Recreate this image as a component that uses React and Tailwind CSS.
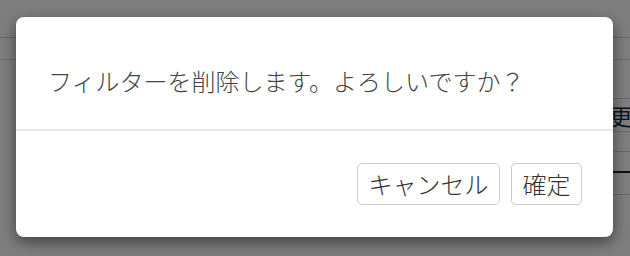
export default function App() {
  return (
    <div
      className="relative w-[630px] h-[256px] overflow-hidden bg-white"
      style={{ fontFamily: '"Noto Sans CJK JP", "Noto Sans", sans-serif' }}
    >
      {/* Page behind the modal */}
      <div className="flex flex-col">
        <div className="h-[38px] border-b border-[#d0d0d0]" />
        <div className="h-[22px] border-b border-[#d8d8d8]" />
        <div className="flex justify-end">
          <div className="w-[30px] flex flex-col">
            <div className="h-[39px] border-b border-[#d0d0d0]" />
            <div className="h-[33px] border-b border-[#d0d0d0] flex items-center text-[22px] leading-none text-[#1a2a44] pl-[10px] whitespace-nowrap">
              更新
            </div>
            <div className="h-[20px] border-b border-[#d0d0d0]" />
            <div className="h-[21px] border-b-2 border-[#222] ml-[12px]" />
            <div className="h-[22px] border-b border-[#d0d0d0]" />
          </div>
        </div>
      </div>

      {/* Backdrop */}
      <div className="absolute inset-0 bg-black/50 pt-[17px] pl-[16px]">
        <div className="w-[597px] h-[220px] bg-white rounded-[8px] shadow-[0_5px_15px_rgba(0,0,0,0.5)] flex flex-col">
          <div className="h-[114px] flex items-center pt-[16px] px-8 text-[24px] font-light text-[#444] border-b-2 border-[#e8e8e8] whitespace-nowrap">
            フィルターを削除します。よろしいですか？
          </div>
          <div className="flex-1 flex items-center justify-end gap-[11px] pr-[31px]">
            <button className="w-[143px] h-[42px] border-[1.5px] border-[#cccccc] rounded-[5px] bg-white text-[24px] font-light text-[#333] flex items-center justify-center">
              キャンセル
            </button>
            <button className="w-[71px] h-[42px] border-[1.5px] border-[#cccccc] rounded-[5px] bg-white text-[24px] font-light text-[#333] flex items-center justify-center">
              確定
            </button>
          </div>
        </div>
      </div>
    </div>
  )
}
